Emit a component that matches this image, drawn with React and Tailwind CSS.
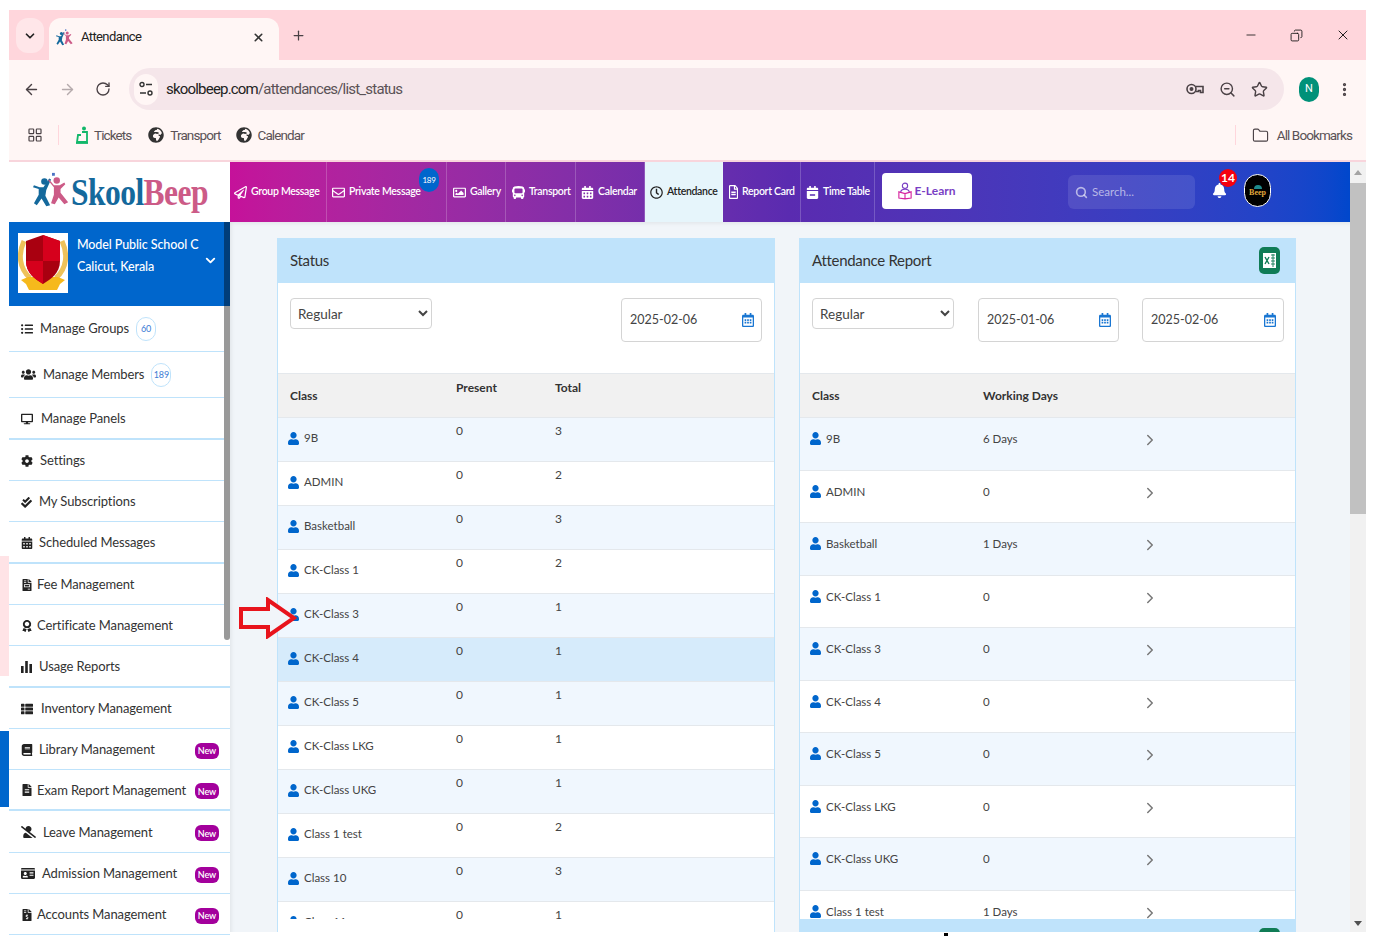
import React from "react";
import {
  ArrowLeft, ArrowRight, RotateCw, X, Plus, Minus, Copy, ChevronDown, ChevronRight,
  LayoutGrid, Star, ZoomOut, MoreVertical, Folder, Search,
} from "lucide-react";
import {
  FaRegPaperPlane, FaRegEnvelope, FaRegImage, FaBus, FaCalendarAlt, FaRegClock, FaRegFileAlt,
  FaCalendarMinus, FaBell, FaListUl, FaUsers, FaDesktop, FaCog, FaCheckDouble, FaFileInvoice,
  FaAward, FaThList, FaBook, FaFileAlt, FaUserSlash, FaIdCard, FaFileInvoiceDollar,
  FaUser, FaRegCalendarAlt, FaGlobeAfrica,
} from "react-icons/fa";

const poppins = "font-['Lato','Liberation_Sans',sans-serif]";

const BarsIcon = ({ className }) => (
  <svg viewBox="0 0 12 12" className={className} fill="currentColor">
    <rect x="0" y="5" width="2.6" height="7" />
    <rect x="4.2" y="0" width="2.6" height="12" />
    <rect x="8.4" y="3" width="2.6" height="9" />
  </svg>
);

const navItems = [
  { label: "Group Message", icon: FaRegPaperPlane, w: "w-[97px] pl-[4px]" },
  { label: "Private Message", icon: FaRegEnvelope, w: "w-[120px] pl-[5px]", badge: "189" },
  { label: "Gallery", icon: FaRegImage, w: "w-[59px] pl-[6px]" },
  { label: "Transport", icon: FaBus, w: "w-[70px] pl-[6px]" },
  { label: "Calendar", icon: FaCalendarAlt, w: "w-[69px] pl-[5px]" },
  { label: "Attendance", icon: FaRegClock, w: "w-[78px] pl-[5px]", active: true },
  { label: "Report Card", icon: FaRegFileAlt, w: "w-[78px] pl-[6px]", iconSize: "w-[9px] h-[14px]" },
  { label: "Time Table", icon: FaCalendarMinus, w: "w-[74px] pl-[5px]" },
];

const sideItems = [
  { label: "Manage Groups", icon: FaListUl, gap: "gap-[7px]", h: "h-[46px]", count: "60" },
  { label: "Manage Members", icon: FaUsers, gap: "gap-[7px]", h: "h-[46px]", count: "189", iconSize: "w-[15px] h-[13px]" },
  { label: "Manage Panels", icon: FaDesktop, gap: "gap-[8px]", h: "h-[41.5px] pt-[2px]", thick: true },
  { label: "Settings", icon: FaCog, gap: "gap-[7px]", h: "h-[41.5px] pt-[2px]" },
  { label: "My Subscriptions", icon: FaCheckDouble, gap: "gap-[7px]", h: "h-[41px] pt-[2px]", iconSize: "w-[11px] h-[11px]" },
  { label: "Scheduled Messages", icon: FaCalendarAlt, gap: "gap-[6px]", h: "h-[41.5px] pt-[2px]", thick: true },
  { label: "Fee Management", icon: FaFileInvoice, gap: "gap-[4px]", h: "h-[41.5px] pt-[2px]" },
  { label: "Certificate Management", icon: FaAward, gap: "gap-[4px]", h: "h-[41px] pt-[2px]" },
  { label: "Usage Reports", icon: BarsIcon, gap: "gap-[6px]", h: "h-[41.5px] pt-[2px]", thick: true },
  { label: "Inventory Management", icon: FaThList, gap: "gap-[8px]", h: "h-[41px] pt-[2px]" },
  { label: "Library Management", icon: FaBook, gap: "gap-[6px]", h: "h-[41px] pt-[2px]", isNew: true },
  { label: "Exam Report Management", icon: FaFileAlt, gap: "gap-[4px]", h: "h-[41.5px] pt-[2px]", isNew: true, thick: true },
  { label: "Leave Management", icon: FaUserSlash, gap: "gap-[7px]", h: "h-[41.5px] pt-[2px]", isNew: true, iconSize: "w-[15px] h-[14px]" },
  { label: "Admission Management", icon: FaIdCard, gap: "gap-[7px]", h: "h-[41px] pt-[2px]", isNew: true, iconSize: "w-[14px] h-[13px]" },
  { label: "Accounts Management", icon: FaFileInvoiceDollar, gap: "gap-[4px]", h: "h-[41px] pt-[2px]", isNew: true },
];

const statusRows = [
  ["9B", "0", "3"], ["ADMIN", "0", "2"], ["Basketball", "0", "3"], ["CK-Class 1", "0", "2"],
  ["CK-Class 3", "0", "1"], ["CK-Class 4", "0", "1"], ["CK-Class 5", "0", "1"], ["CK-Class LKG", "0", "1"],
  ["CK-Class UKG", "0", "1"], ["Class 1 test", "0", "2"], ["Class 10", "0", "3"], ["Class 11", "0", "1"],
];

const reportRows = [
  ["9B", "6 Days"], ["ADMIN", "0"], ["Basketball", "1 Days"], ["CK-Class 1", "0"], ["CK-Class 3", "0"],
  ["CK-Class 4", "0"], ["CK-Class 5", "0"], ["CK-Class LKG", "0"], ["CK-Class UKG", "0"], ["Class 1 test", "1 Days"],
];

const LogoMark = ({ className }) => (
  <svg viewBox="0 0 40 36" className={className}>
    <circle cx="12" cy="9" r="3.4" fill="#14699c" />
    <path d="M1 13l6 2 4 0 6-9 2 1-5 11-1 6 5 10-4 1-5-8-5 7-3-2 5-9 0-6-6-2z" fill="#14699c" />
    <circle cx="25" cy="8" r="3.4" fill="#cc5b87" />
    <path d="M17 7l5 6 6 0 5-3 1 2-5 5 0 4 8 10-4 2-6-7-4 7-4-1 3-9 0-8-6-7z" fill="#cc5b87" />
    <rect x="20" y="0" width="3" height="3" fill="#4a72c4" />
  </svg>
);

const Crest = () => (
  <svg viewBox="0 0 50 60" className="w-[50px] h-[60px] bg-white">
    <path d="M6 8c-6 13-5 27 6 37M44 8c6 13 5 27-6 37" fill="none" stroke="#eec25a" strokeWidth="5" />
    <path d="M3 47l7-3 30 0 7 3-5 4-3 6-28 0-3-6z" fill="#f6b91c" />
    <path d="M25 2l17 6 0 20c0 12-9 18-17 23-8-5-17-11-17-23l0-20z" fill="#a90010" />
    <path d="M25 2l17 6 0 20-17 0zM25 28l0 23c-8-5-17-11-17-23z" fill="#d6001c" />
  </svg>
);

const Excel = () => (
  <svg viewBox="0 0 21 27" className="w-[21px] h-[27px]">
    <rect width="21" height="27" rx="5" fill="#107c56" />
    <rect x="4" y="6" width="13" height="15" fill="#fff" />
    <path d="M12 8h4M12 11h4M12 14h4M12 17h4M14 7v13" stroke="#107c56" strokeWidth="0.9" />
    <path d="M6 10l4 7M10 10l-4 7" stroke="#107c56" strokeWidth="1.4" />
  </svg>
);

const TicketIcon = () => (
  <svg viewBox="0 0 14 18" className="w-[14px] h-[18px]">
    <circle cx="9" cy="2.5" r="2" fill="#12b76a" />
    <path d="M7 6h5v10H2l1-7h3" fill="none" stroke="#12b76a" strokeWidth="1.8" />
    <path d="M1 17h12" stroke="#12b76a" strokeWidth="1.8" />
  </svg>
);

const ELearnIcon = () => (
  <svg viewBox="0 0 16 20" className="w-[14px] h-[18px]" fill="none" strokeWidth="1.3">
    <circle cx="8" cy="4" r="3" stroke="#7a3fc4" />
    <path d="M3 12c0-3 2-4 5-4s5 1 5 4" stroke="#7a3fc4" />
    <path d="M1 11l7 2 7-2v7l-7 1-7-1zM8 13v6" stroke="#d6249f" />
  </svg>
);

const KeyIcon = () => (
  <svg viewBox="0 0 18 12" className="w-[18px] h-[12px] ml-auto" fill="none" stroke="#4a4145" strokeWidth="1.6">
    <circle cx="5.5" cy="6" r="4.5" />
    <circle cx="5.5" cy="6" r="1.2" fill="#4a4145" />
    <path d="M10 3.5h7v6h-2.5V7.5h-2V8.5H10" />
  </svg>
);

const TuneIcon = () => (
  <svg viewBox="0 0 14 16" className="w-[14px] h-[16px]" fill="none" stroke="#333" strokeWidth="1.4">
    <circle cx="3" cy="3.5" r="2" />
    <path d="M7 3.5h6M1 12h6" />
    <circle cx="11" cy="12" r="2" />
  </svg>
);

const TabStrip = () => (
  <div className="h-[50px] flex-none bg-[#ffd6dc] flex items-start pt-2 pl-[7px]">
    <div className="w-[28px] h-[35px] rounded-xl bg-[#ffe6e9] flex items-center justify-center text-[#222]">
      <ChevronDown size={14} strokeWidth={3} />
    </div>
    <div className="ml-[5px] w-[230px] h-[42px] rounded-t-xl bg-[#fff6f5] flex items-center pl-[7px] pr-[14px] pb-1">
      <LogoMark className="w-[18px] h-[17px]" />
      <span className="ml-[7px] text-[13px] tracking-[-0.6px] text-[#222] font-['Roboto',sans-serif]">Attendance</span>
      <X size={13} strokeWidth={3} className="ml-auto text-[#333]" />
    </div>
    <Plus size={15} strokeWidth={2} className="ml-[12px] mt-[10px] text-[#4a4145]" />
    <div className="ml-auto flex items-center mt-[9px] text-[#111]">
      <Minus size={14} strokeWidth={1.4} />
      <Copy size={13} strokeWidth={1.6} className="ml-[32px] -scale-x-100" />
      <X size={16} strokeWidth={1.4} className="ml-[32px] mr-[15px]" />
    </div>
  </div>
);

const Toolbar = () => (
  <div className="h-[100px] flex-none bg-[#fff6f5] font-['Roboto',sans-serif]">
    <div className="h-[50px] flex items-center pt-2 text-[#4a4145]">
      <ArrowLeft size={17} className="ml-[14px]" />
      <ArrowRight size={17} className="ml-[19px] text-[#b5aaac]" />
      <RotateCw size={16} className="ml-[19px]" />
      <div className="ml-[18px] w-[1155px] h-[42px] rounded-full bg-[#f5e6ea] flex items-center pl-[5px] pr-4">
        <div className="w-6 h-[31px] rounded-full bg-[#fff6f5] flex items-center justify-center">
          <TuneIcon />
        </div>
        <span className="ml-2 text-[15px] tracking-[-0.8px] text-[#222]">
          skoolbeep.com<span className="text-[#5a5256]">/attendances/list_status</span>
        </span>
        <KeyIcon />
        <ZoomOut size={17} className="ml-[15px]" />
        <Star size={17} strokeWidth={2} className="ml-[15px]" />
      </div>
      <div className="ml-[15px] w-5 h-[25px] rounded-full bg-[#009179] text-white text-[11px] flex items-center justify-center">N</div>
      <MoreVertical size={17} strokeWidth={2.6} className="ml-[17px]" />
    </div>
    <div className="h-[50px] flex items-center text-[13.5px] text-[#5a5256] tracking-[-0.9px]">
      <LayoutGrid size={16} strokeWidth={1.8} className="ml-[18px] text-[#4a4145]" />
      <div className="ml-[15px] w-px h-5 bg-[#ffd6dc]" />
      <div className="ml-4"><TicketIcon /></div>
      <span className="ml-[5px]">Tickets</span>
      <FaGlobeAfrica size={16} className="ml-[17px] text-[#333]" />
      <span className="ml-[6px]">Transport</span>
      <FaGlobeAfrica size={16} className="ml-[15px] text-[#333]" />
      <span className="ml-[6px]">Calendar</span>
      <div className="ml-auto w-px h-5 bg-[#ffd6dc]" />
      <Folder size={17} strokeWidth={1.6} className="ml-[16px] text-[#4a4145]" />
      <span className="ml-2 mr-[14px]">All Bookmarks</span>
    </div>
  </div>
);

const TopNav = () => (
  <div className="h-[60px] flex-none flex">
    <div className="w-[221px] flex-none bg-white flex items-center pl-6">
      <LogoMark className="w-[38px] h-[36px] mb-1 flex-none" />
      <span className="font-['Liberation_Serif',serif] font-bold text-[35px] tracking-[-0.6px] leading-none origin-left scale-x-[0.9] scale-y-110 text-[#14699c] whitespace-nowrap">
        Skool<span className="text-[#cc5b87]">Beep</span>
      </span>
    </div>
    <div className={`flex-1 flex items-stretch bg-gradient-to-r from-[#c5119a] via-[#5a2bb0] to-[#0047cc] ${poppins}`}>
      {navItems.map((n) => {
        const Icon = n.icon;
        return (
          <div
            key={n.label}
            className={`${n.w} relative flex items-center gap-[4px] border-r border-white/20 text-[10.5px] tracking-[-0.3px] ${
              n.active ? "bg-[#e6f5fb] text-[#222]" : "text-white"
            }`}
          >
            <Icon preserveAspectRatio={n.iconSize ? "none" : undefined} className={`flex-none ${n.iconSize || "w-[13px] h-[13px]"}`} />
            <span className="font-semibold whitespace-nowrap">{n.label}</span>
            {n.badge && (
              <span className="absolute top-[6px] right-[7px] w-5 h-6 rounded-full bg-[#0066cc] text-white text-[8px] flex items-center justify-center">
                {n.badge}
              </span>
            )}
          </div>
        );
      })}
      <div className="ml-[7px] mt-[11px] w-[90px] h-9 rounded bg-white flex items-center justify-center gap-[2px]">
        <ELearnIcon />
        <span className="text-[12px] font-bold text-[#7a3fc4]">E-Learn</span>
      </div>
      <div className="ml-[96px] mt-[13px] w-[127px] h-[34px] rounded-md bg-white/10 flex items-center pl-[7px] gap-[4px] text-white/60">
        <Search size={13} strokeWidth={3} />
        <span className="text-[11.5px]">Search...</span>
      </div>
      <div className="ml-[17px] mt-[21px] relative h-[18px]">
        <FaBell size={15} className="text-white" />
        <span className="absolute -top-[14px] left-[7px] w-[18px] h-[18px] rounded-full bg-[#f5000f] text-white text-[12px] font-bold flex items-center justify-center">14</span>
      </div>
      <div className="ml-[17px] mt-[12px] w-[27px] h-[33px] rounded-full border border-white bg-black flex flex-col items-center justify-center">
        <span className="w-2 h-[4px] bg-[#1f8a8a] rounded-t-full" />
        <span className="font-['Liberation_Serif',serif] font-bold text-[8px] leading-none text-[#e0a83c]">Beep</span>
      </div>
    </div>
    <div className="w-4 flex-none bg-[#f1f1f1]" />
  </div>
);

const Sidebar = () => (
  <div className={`w-[221px] flex-none flex flex-col relative bg-white text-[#333] ${poppins}`}>
    <div className="h-[84px] flex-none bg-[#0066cc] flex pl-[9px] pt-[11px] text-white text-[12.5px] font-medium">
      <Crest />
      <div className="ml-[9px] flex flex-col pt-[2px] gap-[3px] leading-[19px] tracking-[-0.1px]">
        <span className="whitespace-nowrap">Model Public School C</span>
        <span>Calicut, Kerala</span>
      </div>
      <ChevronDown size={15} strokeWidth={3} className="absolute left-[194px] top-[31px]" />
    </div>
    {sideItems.map((s) => {
      const Icon = s.icon;
      return (
        <div
          key={s.label}
          className={`${s.h} ${s.gap} flex-none flex items-center pl-3 pr-[11px] border-[#bfe3fb] text-[13px] tracking-[-0.1px] whitespace-nowrap ${
            s.thick ? "border-b-2" : "border-b"
          }`}
        >
          <Icon className={`flex-none text-[#222] ${s.iconSize || "w-3 h-3"}`} />
          <span>{s.label}</span>
          {s.count && (
            <span className="w-5 h-6 rounded-full border border-[#bfe3fb] text-[#3a7bd5] text-[9px] flex items-center justify-center">
              {s.count}
            </span>
          )}
          {s.isNew && (
            <span className="ml-auto translate-y-px w-6 h-4 rounded-md bg-[#a3009c] text-white text-[9px] font-semibold flex items-center justify-center">
              New
            </span>
          )}
        </div>
      );
    })}
    <div className="absolute top-0 right-0 w-[6px] h-[84px] bg-[#003d7a]" />
    <div className="absolute top-[84px] right-0 w-[6px] h-[334px] rounded-b bg-[#999999]" />
  </div>
);

const Field = ({ value, className }) => (
  <div className={`h-[44px] rounded border border-[#d4d4d4] bg-white flex items-center justify-between pl-2 pr-[7px] text-[12.5px] text-[#444] ${className}`}>
    <span>{value}</span>
    <FaRegCalendarAlt preserveAspectRatio="none" className="w-3 h-[14px] text-[#1976d2]" />
  </div>
);

const RegularSelect = () => (
  <select defaultValue="Regular" className="w-[142px] h-[31px] rounded border border-[#d4d4d4] bg-white pl-[3px] text-[13.5px] text-[#444]">
    <option>Regular</option>
  </select>
);

const PersonIcon = () => (
  <FaUser preserveAspectRatio="none" className="flex-none mt-[1px] w-[11px] h-[13px] text-[#0066cc]" />
);

const rowBg = (i) => (i % 2 === 0 ? "bg-[#f0f7fe]" : "bg-white");

const StatusCard = () => (
  <div className="w-[498px] flex-none self-stretch border-x border-[#bfe3fb] bg-white">
    <div className="h-[45px] -mx-px bg-[#bfe3fb] flex items-center pl-[13px] text-[15px] tracking-[-0.3px] text-[#333]">Status</div>
    <div className="h-[91px] flex items-start justify-between pt-[15px] pl-[12px] pr-[12px] border-b border-[#e4e8ec]">
      <RegularSelect />
      <Field value="2025-02-06" className="w-[141px]" />
    </div>
    <div className="h-[44px] grid grid-cols-[178px_99px_1fr] bg-[#f1f1f1] border-b border-[#e4e8ec] text-[12px] font-bold text-[#333]">
      <span className="pl-[12px] pt-[13px]">Class</span>
      <span className="pt-[5px]">Present</span>
      <span className="pt-[5px]">Total</span>
    </div>
    {statusRows.map((r, i) => (
      <div
        key={r[0]}
        className={`h-[44px] grid grid-cols-[178px_99px_1fr] border-b border-[#e4e8ec] text-[11.5px] text-[#444] ${
          i === 5 ? "bg-[#d6ebfb]" : rowBg(i)
        }`}
      >
        <span className={`pl-[10px] pt-[13px] flex items-start gap-[5px] overflow-hidden ${i === 11 ? "h-[17px]" : ""}`}>
          <PersonIcon />
          <span className="-mt-[2px]">{r[0]}</span>
        </span>
        <span className="pt-[4px] text-[12px]">{r[1]}</span>
        <span className="pt-[4px] text-[12px]">{r[2]}</span>
      </div>
    ))}
  </div>
);

const ReportCard = () => (
  <div className="w-[497px] flex-none flex flex-col">
    <div className="h-[681px] flex-none overflow-hidden border-x border-[#bfe3fb] bg-white">
      <div className="h-[45px] -mx-px bg-[#bfe3fb] flex items-center justify-between pl-[13px] pr-[16px] text-[15px] tracking-[-0.3px] text-[#333]">
        <span>Attendance Report</span>
        <Excel />
      </div>
      <div className="h-[91px] flex items-start pt-[15px] pl-[12px] border-b border-[#e4e8ec]">
        <RegularSelect />
        <Field value="2025-01-06" className="ml-[24px] w-[141px]" />
        <Field value="2025-02-06" className="ml-[23px] w-[142px]" />
      </div>
      <div className="h-[44px] grid grid-cols-[183px_160px_1fr] items-center bg-[#f1f1f1] border-b border-[#e4e8ec] text-[12px] font-bold text-[#333]">
        <span className="pl-[12px]">Class</span>
        <span>Working Days</span>
      </div>
      {reportRows.map((r, i) => (
        <div key={r[0]} className={`h-[52.5px] grid grid-cols-[183px_160px_1fr] border-b border-[#e4e8ec] text-[11.5px] text-[#444] ${rowBg(i)}`}>
          <span className="pl-[10px] pt-[13px] flex items-start gap-[5px]">
            <PersonIcon />
            <span className="-mt-[1px]">{r[0]}</span>
          </span>
          <span className="pt-[12px]">{r[1]}</span>
          <ChevronRight size={18} strokeWidth={2} className="mt-[13px] -ml-[2px] text-[#777]" />
        </div>
      ))}
    </div>
    <div className="h-[40px] flex-none bg-[#bfe3fb] flex justify-end pr-[16px] pt-[9px]">
      <Excel />
    </div>
  </div>
);

const PageScroll = () => (
  <div className="w-4 flex-none bg-[#f1f1f1] flex flex-col items-center relative">
    <span className="absolute top-[-52px] w-0 h-0 border-x-[4px] border-x-transparent border-b-[5px] border-b-[#a3a3a3]" />
    <div className="absolute top-[-39px] w-full h-[331px] bg-[#c1c1c1]" />
    <span className="absolute bottom-[6px] w-0 h-0 border-x-[4px] border-x-transparent border-t-[5px] border-t-[#505050]" />
  </div>
);

export default function App() {
  return (
    <div className="relative w-[1376px] h-[936px] overflow-hidden bg-white pt-[10px] pl-[9px] pr-[10px] pb-[4px] flex flex-col">
      <TabStrip />
      <Toolbar />
      <div className="h-[2px] flex-none bg-[#f8d5dc]" />
      <TopNav />
      <div className="flex-1 min-h-0 flex">
        <Sidebar />
        <div className={`flex-1 min-w-0 overflow-hidden bg-[#f1f5f9] shadow-[inset_3px_3px_4px_-2px_rgba(0,0,0,0.08)] flex gap-6 pt-4 pl-[47px] ${poppins}`}>
          <StatusCard />
          <ReportCard />
        </div>
        <PageScroll />
      </div>

      {/* bits of the window behind and the annotation arrow */}
      <div className="absolute left-0 top-[556px] w-[9px] h-[120px] bg-[#ffe3e6]" />
      <div className="absolute left-0 top-[731px] w-[9px] h-[76px] bg-[#0066cc]" />
      <div className="absolute left-[944px] top-[933px] w-1 h-[3px] bg-black" />
      <svg viewBox="0 0 58 42" className="absolute left-[239px] top-[597px] w-[58px] h-[42px]">
        <path d="M2 12h27V3l26 18-26 18v-9H2z" fill="#f1f5f9" stroke="#e8141c" strokeWidth="4" />
      </svg>
    </div>
  );
}
